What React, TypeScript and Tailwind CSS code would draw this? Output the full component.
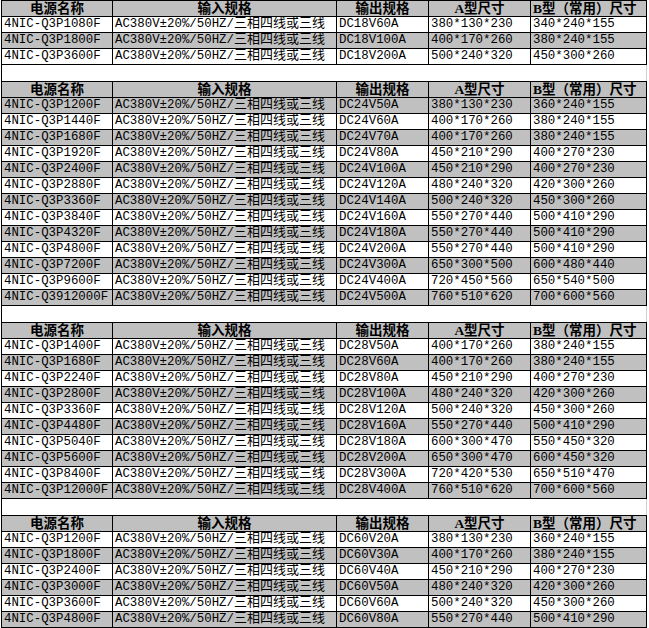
import React from "react";

type Row = [string, string, string, string];

const sections: { rows: Row[] }[] = [
  {
    rows: [
      ["4NIC-Q3P1080F", "DC18V60A", "380*130*230", "340*240*155"],
      ["4NIC-Q3P1800F", "DC18V100A", "400*170*260", "380*240*155"],
      ["4NIC-Q3P3600F", "DC18V200A", "500*240*320", "450*300*260"],
    ],
  },
  {
    rows: [
      ["4NIC-Q3P1200F", "DC24V50A", "380*130*230", "360*240*155"],
      ["4NIC-Q3P1440F", "DC24V60A", "400*170*260", "380*240*155"],
      ["4NIC-Q3P1680F", "DC24V70A", "400*170*260", "380*240*155"],
      ["4NIC-Q3P1920F", "DC24V80A", "450*210*290", "400*270*230"],
      ["4NIC-Q3P2400F", "DC24V100A", "450*210*290", "400*270*230"],
      ["4NIC-Q3P2880F", "DC24V120A", "480*240*320", "420*300*260"],
      ["4NIC-Q3P3360F", "DC24V140A", "500*240*320", "450*300*260"],
      ["4NIC-Q3P3840F", "DC24V160A", "550*270*440", "500*410*290"],
      ["4NIC-Q3P4320F", "DC24V180A", "550*270*440", "500*410*290"],
      ["4NIC-Q3P4800F", "DC24V200A", "550*270*440", "500*410*290"],
      ["4NIC-Q3P7200F", "DC24V300A", "650*300*500", "600*480*440"],
      ["4NIC-Q3P9600F", "DC24V400A", "720*450*560", "650*540*500"],
      ["4NIC-Q3912000F", "DC24V500A", "760*510*620", "700*600*560"],
    ],
  },
  {
    rows: [
      ["4NIC-Q3P1400F", "DC28V50A", "400*170*260", "380*240*155"],
      ["4NIC-Q3P1680F", "DC28V60A", "400*170*260", "380*240*155"],
      ["4NIC-Q3P2240F", "DC28V80A", "450*210*290", "400*270*230"],
      ["4NIC-Q3P2800F", "DC28V100A", "480*240*320", "420*300*260"],
      ["4NIC-Q3P3360F", "DC28V120A", "500*240*320", "450*300*260"],
      ["4NIC-Q3P4480F", "DC28V160A", "550*270*440", "500*410*290"],
      ["4NIC-Q3P5040F", "DC28V180A", "600*300*470", "550*450*320"],
      ["4NIC-Q3P5600F", "DC28V200A", "650*300*470", "600*450*320"],
      ["4NIC-Q3P8400F", "DC28V300A", "720*420*530", "650*510*470"],
      ["4NIC-Q3P12000F", "DC28V400A", "760*510*620", "700*600*560"],
    ],
  },
  {
    rows: [
      ["4NIC-Q3P1200F", "DC60V20A", "380*130*230", "360*240*155"],
      ["4NIC-Q3P1800F", "DC60V30A", "400*170*260", "380*240*155"],
      ["4NIC-Q3P2400F", "DC60V40A", "450*210*290", "400*270*230"],
      ["4NIC-Q3P3000F", "DC60V50A", "480*240*320", "420*300*260"],
      ["4NIC-Q3P3600F", "DC60V60A", "500*240*320", "450*300*260"],
      ["4NIC-Q3P4800F", "DC60V80A", "550*270*440", "500*410*290"],
    ],
  },
];

const cell = "h-full shrink-0 border-r border-black overflow-hidden whitespace-nowrap flex items-center";

function HeaderRow() {
  const h = `${cell} justify-center font-bold text-[13.5px] leading-[15px]`;
  return (
    <div className="flex h-[17px] border-y border-black bg-[#c0c0c0] text-black [font-family:'Liberation_Serif','Noto_Sans_CJK_SC',serif]">
      <div className={`${h} w-[111px]`}>电源名称</div>
      <div className={`${h} w-[224px]`}>输入规格</div>
      <div className={`${h} w-[92px]`}>输出规格</div>
      <div className={`${h} w-[102px]`}>A型尺寸</div>
      <div className={`${h} w-[116px] !justify-start pl-[2px]`}>B型（常用）尺寸</div>
    </div>
  );
}

function DataRow({ row, grey }: { row: Row; grey: boolean }) {
  const d = `${cell} pl-[2px]`;
  return (
    <div
      className={`flex h-[16px] border-b border-black text-black text-[12.4px] leading-[15px] [font-family:'Liberation_Mono','Noto_Sans_CJK_SC',monospace] ${
        grey ? "bg-[#c0c0c0]" : "bg-white"
      }`}
    >
      <div className={`${d} w-[111px]`}>{row[0]}</div>
      <div className={`${d} w-[224px]`}>
        <span>AC380V±20%/50HZ/</span>
        <span className="-translate-y-[3px] text-[13px] leading-[15px] [font-family:'Noto_Sans_CJK_SC',sans-serif]">三相四线或三线</span>
      </div>
      <div className={`${d} w-[92px]`}>{row[1]}</div>
      <div className={`${d} w-[102px]`}>{row[2]}</div>
      <div className={`${d} w-[116px]`}>{row[3]}</div>
    </div>
  );
}

export default function App() {
  return (
    <div className="w-[649px] h-[628px] bg-white overflow-hidden">
      <div className="ml-[1px] w-[646px] border-l border-black">
        {sections.map((s, si) => (
          <div key={si}>
            {si > 0 && <div className="h-[16px] w-[645px] border-r border-[#d0d0d0] bg-white" />}
            <HeaderRow />
            {s.rows.map((r, ri) => (
              <DataRow key={ri} row={r} grey={si === 1 ? ri % 2 === 0 : ri % 2 === 1} />
            ))}
          </div>
        ))}
      </div>
    </div>
  );
}
